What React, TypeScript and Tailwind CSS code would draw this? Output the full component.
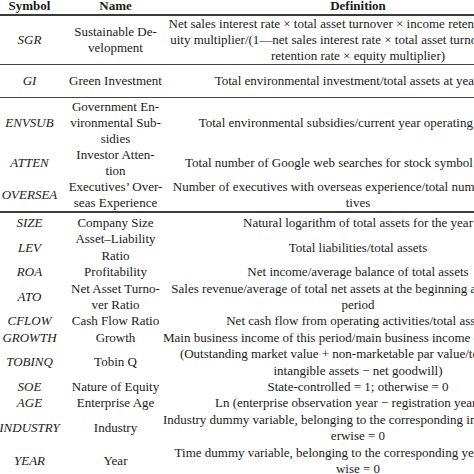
import type { ReactNode } from 'react';

interface RowProps {
  sym: string;
  name: ReactNode;
  def: ReactNode;
  className?: string;
}

const Row = ({ sym, name, def, className = '' }: RowProps) => (
  <div className={`grid grid-cols-[77px_95px_390px] items-center text-center whitespace-nowrap ${className}`}>
    <div className="italic">{sym}</div>
    <div>{name}</div>
    <div>{def}</div>
  </div>
);

const App = () => {
  return (
    <div className="w-[474px] h-[474px] overflow-hidden bg-white font-['Liberation_Serif',serif] text-[13px] text-[#1a1a1a]">
      <div className="-ml-[9px] -mt-[2px] w-[562px]">
        <div className="grid grid-cols-[77px_95px_390px] text-center font-bold leading-4 border-b-2 border-[#3a3a3a]">
          <div>Symbol</div>
          <div>Name</div>
          <div>Definition</div>
        </div>

        <div className="leading-4">
          <Row
            sym="SGR"
            name={<>Sustainable De-<br />velopment</>}
            def={
              <>
                Net sales interest rate × total asset turnover × income retention rate × eq-<br />
                uity multiplier/(1—net sales interest rate × total asset turnover × income<br />
                retention rate × equity multiplier)
              </>
            }
            className="border-b-[1.5px] border-[#444]"
          />
          <Row
            sym="GI"
            name="Green Investment"
            def="Total environmental investment/total assets at year-end"
            className="py-2 border-b-[1.5px] border-[#444]"
          />
          <Row
            sym="ENVSUB"
            name={<>Government En-<br />vironmental Sub-<br />sidies</>}
            def="Total environmental subsidies/current year operating revenue"
            className="pt-[1px]"
          />
          <Row
            sym="ATTEN"
            name={<>Investor Atten-<br />tion</>}
            def="Total number of Google web searches for stock symbol in the year"
          />
          <Row
            sym="OVERSEA"
            name={<>Executives’ Over-<br />seas Experience</>}
            def={<>Number of executives with overseas experience/total number of execu-<br />tives</>}
            className="border-b-2 border-[#3a3a3a]"
          />
        </div>

        <div className="leading-[16.4px] pt-[2px]">
          <Row sym="SIZE" name="Company Size" def="Natural logarithm of total assets for the year" />
          <Row
            sym="LEV"
            name={<>Asset–Liability<br />Ratio</>}
            def="Total liabilities/total assets"
          />
          <Row sym="ROA" name="Profitability" def="Net income/average balance of total assets" />
          <Row
            sym="ATO"
            name={<>Net Asset Turno-<br />ver Ratio</>}
            def={<>Sales revenue/average of total net assets at the beginning and end of the<br />period</>}
          />
          <Row sym="CFLOW" name="Cash Flow Ratio" def="Net cash flow from operating activities/total assets" />
          <Row
            sym="GROWTH"
            name="Growth"
            def="Main business income of this period/main business income of last period − 1"
          />
          <Row
            sym="TOBINQ"
            name="Tobin Q"
            def={<>(Outstanding market value + non-marketable par value/total assets −<br />intangible assets − net goodwill)</>}
          />
          <Row sym="SOE" name="Nature of Equity" def="State-controlled = 1; otherwise = 0" />
          <Row sym="AGE" name="Enterprise Age" def="Ln (enterprise observation year − registration year + 1)" />
          <Row
            sym="INDUSTRY"
            name="Industry"
            def={<>Industry dummy variable, belonging to the corresponding industry = 1, oth-<br />erwise = 0</>}
          />
          <Row
            sym="YEAR"
            name="Year"
            def={<>Time dummy variable, belonging to the corresponding year = 1, other-<br />wise = 0</>}
          />
        </div>
      </div>
    </div>
  );
};

export default App;
